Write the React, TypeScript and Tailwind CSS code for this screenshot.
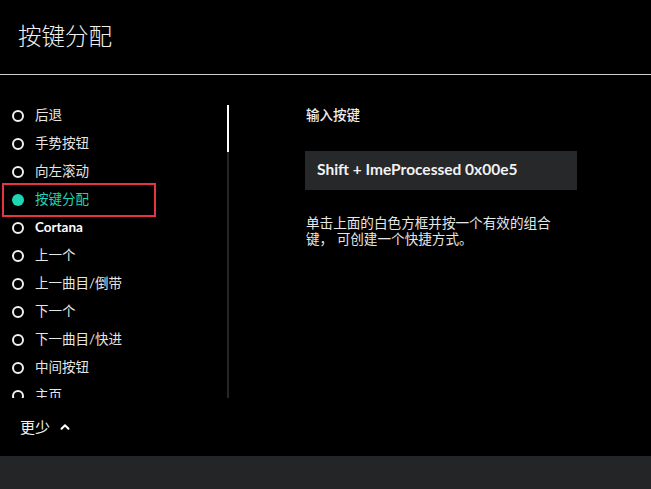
import { ChevronUp } from "lucide-react";

const items = [
  "后退",
  "手势按钮",
  "向左滚动",
  "按键分配",
  "Cortana",
  "上一个",
  "上一曲目/倒带",
  "下一个",
  "下一曲目/快进",
  "中间按钮",
  "主页",
  "音量增大",
];

const font = { fontFamily: "Lato, 'Noto Sans CJK SC', sans-serif" };

export default function App() {
  const selected = "按键分配";

  return (
    <div className="flex h-[489px] w-[651px] flex-col overflow-hidden bg-black text-[#e6e6e6]" style={font}>
      {/* Header */}
      <div className="flex h-[74px] items-center px-[18px]">
        <h1 className="text-[23.5px] font-light leading-none text-[#f0f0f0]">按键分配</h1>
      </div>
      <div className="h-px bg-[#cfcfcf]" />

      {/* Main */}
      <div className="flex flex-1">
        {/* Left list */}
        <div className="flex w-[240px] flex-col">
          <div className="flex">
            <div className="mt-[27px] h-[296px] w-[227px] overflow-hidden">
              {items.map((item) => {
                const active = item === selected;
                return (
                  <div key={item} className="relative flex h-[28px] items-center pl-[12px]">
                    {active ? (
                      <span className="h-[12px] w-[12px] rounded-full bg-[#1fd6b2]" />
                    ) : (
                      <span className="h-[12px] w-[12px] rounded-full border-[2.5px] border-[#f2f2f2]" />
                    )}
                    <span
                      className={`ml-[11px] text-[13.5px] leading-none ${
                        active ? "text-[#1fd6b2]" : "text-[#e6e6e6]"
                      } ${item === "Cortana" ? "font-bold text-white" : ""}`}
                    >
                      {item}
                    </span>
                    {active && (
                      <span className="absolute left-[2px] top-[-3px] h-[34px] w-[154px] border-2 border-[#e8343f]" />
                    )}
                  </div>
                );
              })}
            </div>
            {/* Scrollbar */}
            <div className="mt-[30px] flex h-[293px] w-[2px] flex-col bg-[#262626]">
              <div className="h-[47px] bg-white" />
            </div>
          </div>
          <div className="mt-[20px] flex items-center gap-[8px] pl-[20px]">
            <span className="text-[15px] leading-[18px] text-[#f0f0f0]">更少</span>
            <ChevronUp size={14} strokeWidth={3.5} className="text-white" />
          </div>
        </div>

        {/* Right panel */}
        <div className="ml-[65px] flex w-[272px] flex-col pt-[34px]">
          <p className="ml-px text-[13.5px] font-medium leading-none text-[#eeeeee]">输入按键</p>
          <div className="mt-[28px] flex h-[39px] items-center bg-[#27282a] px-[12px]">
            <span className="text-[15.5px] font-bold text-[#f2f2f2]">Shift + ImeProcessed 0x00e5</span>
          </div>
          <p className="mt-[25px] ml-px text-[13.6px] leading-[16px] text-[#e6e6e6]">
            单击上面的白色方框并按一个有效的组合
            <br />
            键， 可创建一个快捷方式。
          </p>
        </div>
      </div>

      {/* Footer bar */}
      <div className="h-[33px] bg-[#242527]" />
    </div>
  );
}
